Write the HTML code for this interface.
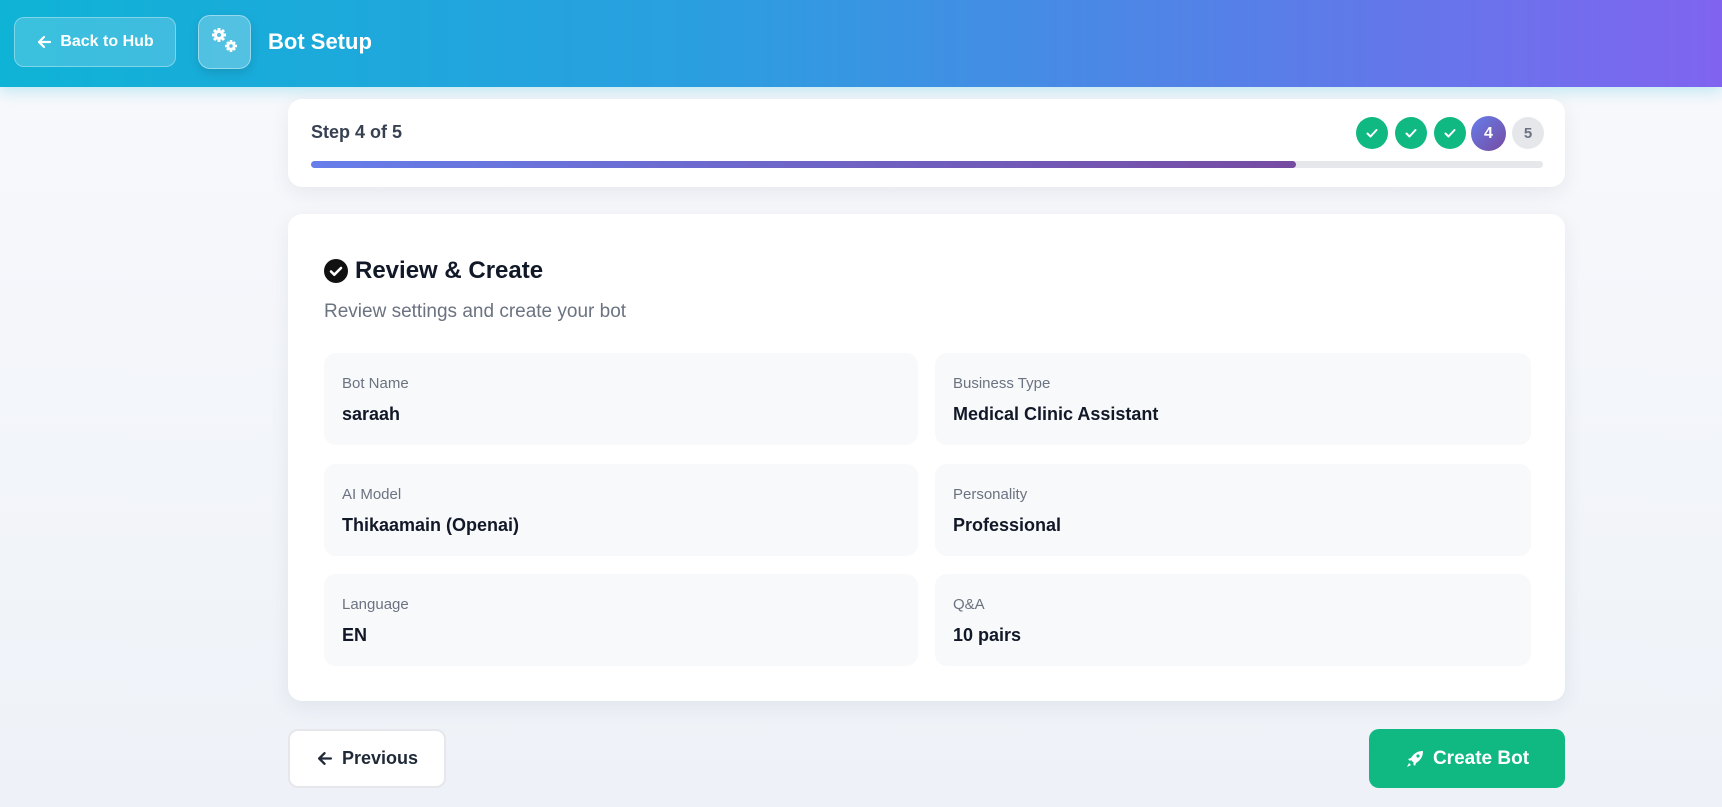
<!DOCTYPE html>
<html><head><style>
*{box-sizing:border-box;margin:0;padding:0}
body{width:1722px;height:807px;overflow:hidden;font-family:"Liberation Sans",sans-serif;background:linear-gradient(180deg,#f8f9fc,#eef2f8);position:relative;color:#111827}
.hdr{position:absolute;left:0;top:0;width:1722px;height:87px;background:linear-gradient(90deg,#0fb3d6 0%,#2a9fe0 40%,#5a7de8 75%,#8064f0 100%);box-shadow:0 4px 14px rgba(15,179,214,.25)}
.back{position:absolute;left:14px;top:17px;width:162px;height:50px;border:1px solid rgba(255,255,255,.35);background:rgba(255,255,255,.18);border-radius:10px;color:#fff;font-weight:bold;font-size:16px;display:flex;align-items:center;justify-content:center;gap:8px}
.gear{position:absolute;left:198px;top:15px;width:53px;height:54px;border:1px solid rgba(255,255,255,.4);background:rgba(255,255,255,.25);border-radius:12px;box-shadow:0 4px 10px rgba(0,0,0,.12)}
.title{position:absolute;left:268px;top:29px;color:#fff;font-weight:bold;font-size:22px}
.card{position:absolute;background:#fff;border-radius:14px;box-shadow:0 6px 20px rgba(30,41,59,.07)}
.dot{position:absolute;top:117px;width:32px;height:32px;border-radius:50%;background:#10b981;display:flex;align-items:center;justify-content:center;color:#fff;font-weight:bold;font-size:15px}
.item{position:absolute;width:594px;height:92px;background:#f8f9fb;border-radius:12px;padding:22px 18px}
.item .l{font-size:15px;color:#6b7280;margin-bottom:12px}
.item .v{font-size:18px;font-weight:bold;color:#111827}
</style></head><body>
<div class="hdr">
 <div class="back"><svg width="16" height="16" viewBox="0 0 16 16"><path d="M14 8H3M8 3L3 8l5 5" stroke="#fff" stroke-width="2.2" fill="none" stroke-linecap="round" stroke-linejoin="round"/></svg>Back to Hub</div>
 <div class="gear">
  <svg width="53" height="53" viewBox="0 0 53 53"><g fill="#fff"><circle cx="20" cy="19" r="5"/><g stroke="#fff" stroke-width="3"><line x1="20" y1="12" x2="20" y2="26"/><line x1="13" y1="19" x2="27" y2="19"/><line x1="15" y1="14" x2="25" y2="24"/><line x1="25" y1="14" x2="15" y2="24"/></g><circle cx="20" cy="19" r="2" fill="#5bbde4"/><circle cx="32" cy="30" r="4.5"/><g stroke="#fff" stroke-width="2.6"><line x1="32" y1="24" x2="32" y2="36"/><line x1="26" y1="30" x2="38" y2="30"/><line x1="28" y1="26" x2="36" y2="34"/><line x1="36" y1="26" x2="28" y2="34"/></g><circle cx="32" cy="30" r="1.8" fill="#5bbde4"/></g></svg>
 </div>
 <div class="title">Bot Setup</div>
</div>
<div class="card" style="left:288px;top:99px;width:1277px;height:88px">
 <div style="position:absolute;left:23px;top:23px;font-size:18px;font-weight:bold;color:#374151">Step 4 of 5</div>
 <div style="position:absolute;left:23px;top:62px;width:1232px;height:7px;border-radius:4px;background:#e5e7eb"><div style="width:985px;height:7px;border-radius:4px;background:linear-gradient(90deg,#667eea,#764ba2)"></div></div>
</div>
<div class="dot" style="left:1356px"><svg width="14" height="14" viewBox="0 0 14 14"><path d="M2.5 7.5l3 3 6-6.5" stroke="#fff" stroke-width="2" fill="none" stroke-linecap="round" stroke-linejoin="round"/></svg></div>
<div class="dot" style="left:1395px"><svg width="14" height="14" viewBox="0 0 14 14"><path d="M2.5 7.5l3 3 6-6.5" stroke="#fff" stroke-width="2" fill="none" stroke-linecap="round" stroke-linejoin="round"/></svg></div>
<div class="dot" style="left:1434px"><svg width="14" height="14" viewBox="0 0 14 14"><path d="M2.5 7.5l3 3 6-6.5" stroke="#fff" stroke-width="2" fill="none" stroke-linecap="round" stroke-linejoin="round"/></svg></div>
<div class="dot" style="left:1471px;top:116px;width:35px;height:35px;background:linear-gradient(135deg,#667eea,#764ba2);font-size:16px">4</div>
<div class="dot" style="left:1512px;background:#e5e7eb;color:#6b7280">5</div>
<div class="card" style="left:288px;top:214px;width:1277px;height:487px">
 <div style="position:absolute;left:36px;top:43px;display:flex;align-items:center;gap:7px;font-size:24px;font-weight:bold"><svg width="24" height="24" viewBox="0 0 24 24"><circle cx="12" cy="12" r="12" fill="#111"/><path d="M7 12.5l3.3 3.2L17 9" stroke="#fff" stroke-width="2.6" fill="none" stroke-linecap="round" stroke-linejoin="round"/></svg>Review &amp; Create</div>
 <div style="position:absolute;left:36px;top:87px;font-size:19px;color:#6b7280">Review settings and create your bot</div>
</div>
<div class="item" style="left:324px;top:353px"><div class="l">Bot Name</div><div class="v">saraah</div></div>
<div class="item" style="left:935px;top:353px;width:596px"><div class="l">Business Type</div><div class="v">Medical Clinic Assistant</div></div>
<div class="item" style="left:324px;top:464px"><div class="l">AI Model</div><div class="v">Thikaamain (Openai)</div></div>
<div class="item" style="left:935px;top:464px;width:596px"><div class="l">Personality</div><div class="v">Professional</div></div>
<div class="item" style="left:324px;top:574px"><div class="l">Language</div><div class="v">EN</div></div>
<div class="item" style="left:935px;top:574px;width:596px"><div class="l">Q&amp;A</div><div class="v">10 pairs</div></div>
<div style="position:absolute;left:288px;top:729px;width:158px;height:59px;background:#fff;border:2px solid #e5e7eb;border-radius:10px;display:flex;align-items:center;justify-content:center;gap:9px;font-size:18px;font-weight:bold;color:#1f2937"><svg width="17" height="17" viewBox="0 0 16 16"><path d="M14 8H3M8 3L3 8l5 5" stroke="#1f2937" stroke-width="2.2" fill="none" stroke-linecap="round" stroke-linejoin="round"/></svg>Previous</div>
<div style="position:absolute;left:1369px;top:729px;width:196px;height:59px;background:#10b981;border-radius:10px;display:flex;align-items:center;justify-content:center;gap:8px;font-size:19px;font-weight:bold;color:#fff"><svg width="20" height="20" viewBox="0 0 20 20"><path d="M18 2c-5 0-9 2-12 7l-3 1 2 2 1-1 3 3-1 1 2 2 1-3c5-3 7-7 7-12z" fill="#fff"/><circle cx="13" cy="7" r="1.6" fill="#10b981"/><path d="M4 14l-2 4 4-2z" fill="#fff"/></svg>Create Bot</div>
</body></html>
